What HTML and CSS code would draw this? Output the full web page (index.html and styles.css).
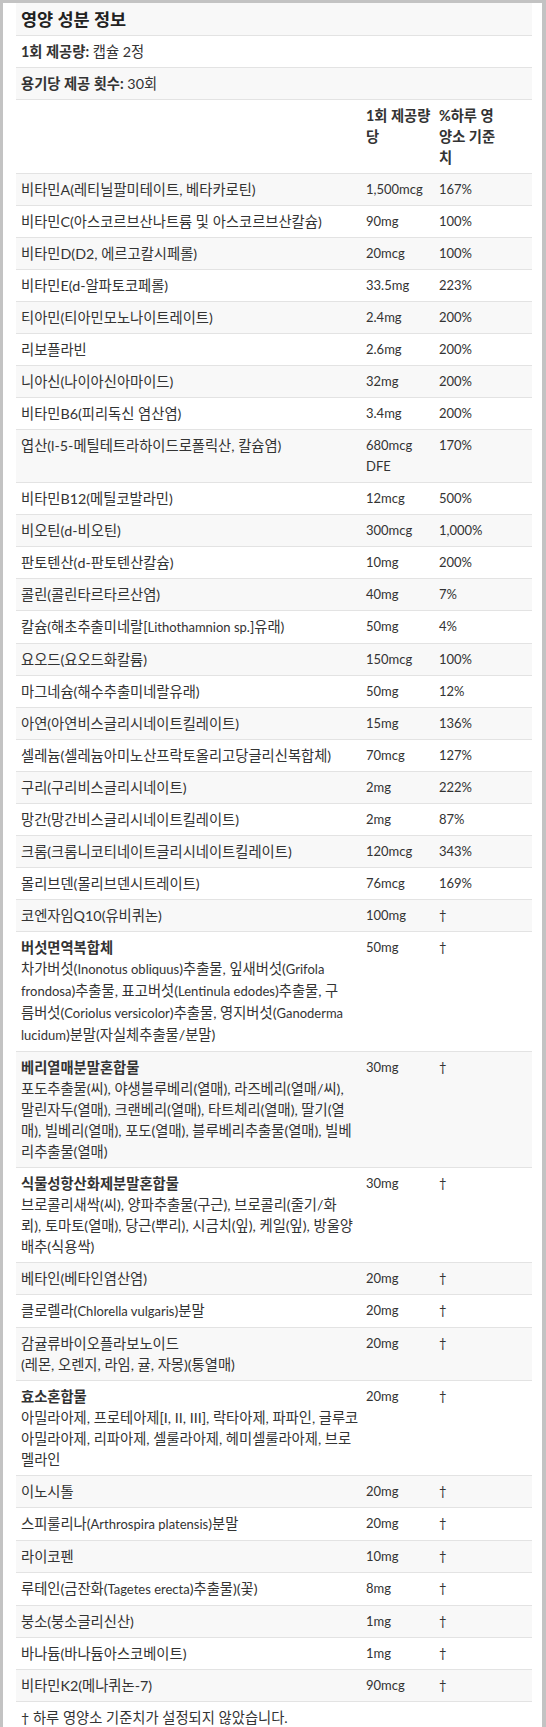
FILE: index.html
```html
<!DOCTYPE html>
<html lang="ko">
<head>
    <meta charset="UTF-8">
    <meta name="viewport" content="width=device-width, initial-scale=1.0">
    <title>영양 성분 정보</title>
    <link rel="stylesheet" href="styles.css">
</head>
<body>
    <div class="frame">
        <table class="facts">
            <colgroup>
                <col class="col-name">
                <col class="col-amount">
                <col class="col-dv">
            </colgroup>
            <tbody>
                <tr><td colspan="3" class="title">영양 성분 정보</td></tr>
                <tr><td colspan="3"><strong>1회 제공량:</strong> 캡슐 2정</td></tr>
                <tr><td colspan="3"><strong>용기당 제공 횟수:</strong> 30회</td></tr>
                <tr class="head">
                    <th></th>
                    <th class="amount">1회 제공량 당</th>
                    <th class="dv">%하루 영양소 기준치</th>
                </tr>
                <tr><td>비타민A(레티닐팔미테이트, 베타카로틴)</td><td class="amount">1,500mcg</td><td class="dv">167%</td></tr>
                <tr><td>비타민C(아스코르브산나트륨 및 아스코르브산칼슘)</td><td class="amount">90mg</td><td class="dv">100%</td></tr>
                <tr><td>비타민D(D2, 에르고칼시페롤)</td><td class="amount">20mcg</td><td class="dv">100%</td></tr>
                <tr><td>비타민E(d-알파토코페롤)</td><td class="amount">33.5mg</td><td class="dv">223%</td></tr>
                <tr><td>티아민(티아민모노나이트레이트)</td><td class="amount">2.4mg</td><td class="dv">200%</td></tr>
                <tr><td>리보플라빈</td><td class="amount">2.6mg</td><td class="dv">200%</td></tr>
                <tr><td>니아신(나이아신아마이드)</td><td class="amount">32mg</td><td class="dv">200%</td></tr>
                <tr><td>비타민B6(피리독신 염산염)</td><td class="amount">3.4mg</td><td class="dv">200%</td></tr>
                <tr><td>엽산(l-5-메틸테트라하이드로폴릭산, 칼슘염)</td><td class="amount">680mcg DFE</td><td class="dv">170%</td></tr>
                <tr><td>비타민B12(메틸코발라민)</td><td class="amount">12mcg</td><td class="dv">500%</td></tr>
                <tr><td>비오틴(d-비오틴)</td><td class="amount">300mcg</td><td class="dv">1,000%</td></tr>
                <tr><td>판토텐산(d-판토텐산칼슘)</td><td class="amount">10mg</td><td class="dv">200%</td></tr>
                <tr><td>콜린(콜린타르타르산염)</td><td class="amount">40mg</td><td class="dv">7%</td></tr>
                <tr><td>칼슘(해초추출미네랄[<span class="sci">Lithothamnion sp.</span>]유래)</td><td class="amount">50mg</td><td class="dv">4%</td></tr>
                <tr><td>요오드(요오드화칼륨)</td><td class="amount">150mcg</td><td class="dv">100%</td></tr>
                <tr><td>마그네슘(해수추출미네랄유래)</td><td class="amount">50mg</td><td class="dv">12%</td></tr>
                <tr><td>아연(아연비스글리시네이트킬레이트)</td><td class="amount">15mg</td><td class="dv">136%</td></tr>
                <tr><td>셀레늄(셀레늄아미노산프락토올리고당글리신복합체)</td><td class="amount">70mcg</td><td class="dv">127%</td></tr>
                <tr><td>구리(구리비스글리시네이트)</td><td class="amount">2mg</td><td class="dv">222%</td></tr>
                <tr><td>망간(망간비스글리시네이트킬레이트)</td><td class="amount">2mg</td><td class="dv">87%</td></tr>
                <tr><td>크롬(크롬니코티네이트글리시네이트킬레이트)</td><td class="amount">120mcg</td><td class="dv">343%</td></tr>
                <tr><td>몰리브덴(몰리브덴시트레이트)</td><td class="amount">76mcg</td><td class="dv">169%</td></tr>
                <tr><td>코엔자임Q10(유비퀴논)</td><td class="amount">100mg</td><td class="dv">†</td></tr>
                <tr>
                    <td><strong>버섯면역복합체</strong><br><span class="parts">차가버섯(<span class="sci">Inonotus obliquus</span>)추출물, 잎새버섯(<span class="sci">Grifola</span><br><span class="sci">frondosa</span>)추출물, 표고버섯(<span class="sci">Lentinula edodes</span>)추출물, 구<br>름버섯(<span class="sci">Coriolus versicolor</span>)추출물, 영지버섯(<span class="sci">Ganoderma</span><br><span class="sci">lucidum</span>)분말(자실체추출물/분말)</span></td>
                    <td class="amount">50mg</td><td class="dv">†</td>
                </tr>
                <tr>
                    <td><strong>베리열매분말혼합물</strong><br><span class="parts">포도추출물(씨), 야생블루베리(열매), 라즈베리(열매/씨),<br>말린자두(열매), 크랜베리(열매), 타트체리(열매), 딸기(열<br>매), 빌베리(열매), 포도(열매), 블루베리추출물(열매), 빌베<br>리추출물(열매)</span></td>
                    <td class="amount">30mg</td><td class="dv">†</td>
                </tr>
                <tr>
                    <td><strong>식물성항산화제분말혼합물</strong><br><span class="parts">브로콜리새싹(씨), 양파추출물(구근), 브로콜리(줄기/화<br>뢰), 토마토(열매), 당근(뿌리), 시금치(잎), 케일(잎), 방울양<br>배추(식용싹)</span></td>
                    <td class="amount">30mg</td><td class="dv">†</td>
                </tr>
                <tr><td>베타인(베타인염산염)</td><td class="amount">20mg</td><td class="dv">†</td></tr>
                <tr><td>클로렐라(<span class="sci">Chlorella vulgaris</span>)분말</td><td class="amount">20mg</td><td class="dv">†</td></tr>
                <tr><td>감귤류바이오플라보노이드<br>(레몬, 오렌지, 라임, 귤, 자몽)(통열매)</td><td class="amount">20mg</td><td class="dv">†</td></tr>
                <tr>
                    <td><strong>효소혼합물</strong><br><span class="parts">아밀라아제, 프로테아제[I, II, III], 락타아제, 파파인, 글루코<br>아밀라아제, 리파아제, 셀룰라아제, 헤미셀룰라아제, 브로<br>멜라인</span></td>
                    <td class="amount">20mg</td><td class="dv">†</td>
                </tr>
                <tr><td>이노시톨</td><td class="amount">20mg</td><td class="dv">†</td></tr>
                <tr><td>스피룰리나(<span class="sci">Arthrospira platensis</span>)분말</td><td class="amount">20mg</td><td class="dv">†</td></tr>
                <tr><td>라이코펜</td><td class="amount">10mg</td><td class="dv">†</td></tr>
                <tr><td>루테인(금잔화(<span class="sci">Tagetes erecta</span>)추출물)(꽃)</td><td class="amount">8mg</td><td class="dv">†</td></tr>
                <tr><td>붕소(붕소글리신산)</td><td class="amount">1mg</td><td class="dv">†</td></tr>
                <tr><td>바나듐(바나듐아스코베이트)</td><td class="amount">1mg</td><td class="dv">†</td></tr>
                <tr><td>비타민K2(메나퀴논-7)</td><td class="amount">90mcg</td><td class="dv">†</td></tr>
                <tr><td colspan="3" class="note">† 하루 영양소 기준치가 설정되지 않았습니다.</td></tr>
            </tbody>
        </table>
    </div>
</body>
</html>
```

FILE: styles.css
```css
body {
    margin: 0;
    font-family: Lato, "Noto Sans CJK KR", sans-serif;
    font-size: 14.3px;
    color: #333;
}
.frame {
    border: solid #c3c3c3;
    border-width: 3px 4px 5px 3px;
    padding: 0 10px 0 13px;
    background-color: #fff;
}
.facts {
    width: 100%;
    border-collapse: collapse;
    table-layout: fixed;
}
.col-name {
    width: 345px;
}
.col-amount {
    width: 73px;
}
.col-dv {
    width: 98px;
}
th, td {
    padding: 5px;
    line-height: 21px;
    text-align: left;
    vertical-align: top;
    border-bottom: 1px solid #e3e3e3;
}
th {
    font-weight: bold;
}
.facts tr:nth-child(odd) {
    background-color: #f8f8f8; /* striped rows */
}
.amount {
    padding-right: 2px;
}
.dv {
    padding-right: 33px;
}
td.amount, td.dv {
    font-size: 13px;
}
.sci {
    font-size: 13px; /* latin names sit smaller next to the hangul */
}
.parts {
    white-space: nowrap;
}
.title {
    padding-top: 6px;
    font-size: 17.5px;
    font-weight: bold;
    color: #222;
}
.note {
    padding-bottom: 2px;
    border-bottom: none;
}
```
